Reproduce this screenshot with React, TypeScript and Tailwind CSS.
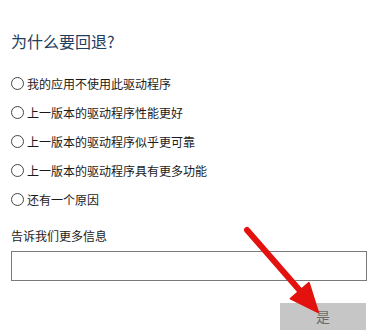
import React from "react";

const reasons = [
  "我的应用不使用此驱动程序",
  "上一版本的驱动程序性能更好",
  "上一版本的驱动程序似乎更可靠",
  "上一版本的驱动程序具有更多功能",
  "还有一个原因",
];

export default function App() {
  return (
    <div
      className="relative w-[373px] h-[335px] overflow-hidden bg-white text-[#1a1a1a]"
      style={{ fontFamily: '"Noto Sans CJK SC", "Noto Sans", sans-serif' }}
    >
      <div className="flex flex-col pl-[11px] pr-[7px]">
        {/* Title */}
        <h1 className="mt-[30px] h-[22px] text-[16px] leading-[22px] text-[#1f3d5e]">为什么要回退?</h1>

        {/* Options */}
        <div className="mt-[17px] flex flex-col">
          {reasons.map((r) => (
            <label key={r} className="flex h-[29px] items-center gap-[3px]">
              <span className="h-[13px] w-[13px] rounded-full border border-[#444] bg-white" />
              <span className="text-[12px] leading-[14px]">{r}</span>
            </label>
          ))}
        </div>

        {/* More info */}
        <div className="mt-[11px] h-[22px] text-[12px] leading-[22px]">告诉我们更多信息</div>
        <div className="mt-[4px] h-[30px] w-[356px] border border-[#7a7a7a] bg-white" />

        <div className="mt-[22px] flex justify-end">
          <button className="flex h-[27px] w-[86px] items-center justify-center bg-[#c6c6c6] text-[14px] text-[#6b6b6b]">
            是
          </button>
        </div>
      </div>

      {/* Red annotation arrow */}
      <svg className="pointer-events-none absolute left-0 top-0" width="373" height="335" viewBox="0 0 373 335">
        <line x1="247" y1="230" x2="302" y2="293" stroke="#e3120f" strokeWidth="6" strokeLinecap="round" />
        <polygon points="318,312 290.6,298.7 308.8,282.9" fill="#e3120f" stroke="#e3120f" strokeWidth="2" strokeLinejoin="round" />
      </svg>
    </div>
  );
}
